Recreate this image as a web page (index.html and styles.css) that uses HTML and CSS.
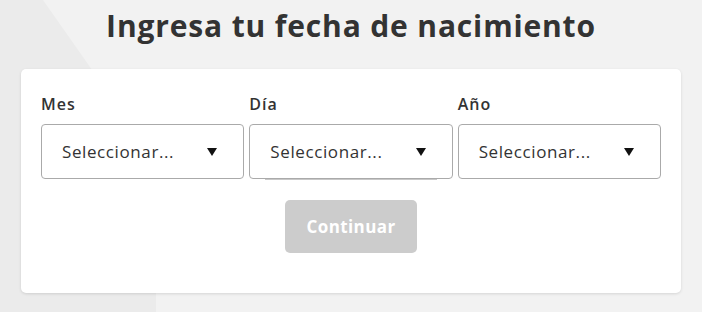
FILE: index.html
```html
<!DOCTYPE html>
<html lang="es">
<head>
<meta charset="utf-8">
<title>Ingresa tu fecha de nacimiento</title>
<link rel="stylesheet" href="styles.css">
</head>
<body>
<div class="page">
  <h1 class="title">Ingresa tu fecha de nacimiento</h1>
  <div class="card">
    <div class="fields">
      <div class="field">
        <label class="label">Mes</label>
        <div class="select"><span class="value">Seleccionar...</span><svg class="arrow" width="10" height="8" viewBox="0 0 10 8"><path d="M0 0H10L5 8Z" fill="#111"/></svg></div>
      </div>
      <div class="field">
        <label class="label">Día</label>
        <div class="select select-open"><span class="value">Seleccionar...</span><svg class="arrow" width="10" height="8" viewBox="0 0 10 8"><path d="M0 0H10L5 8Z" fill="#111"/></svg></div>
      </div>
      <div class="field">
        <label class="label">Año</label>
        <div class="select"><span class="value">Seleccionar...</span><svg class="arrow" width="10" height="8" viewBox="0 0 10 8"><path d="M0 0H10L5 8Z" fill="#111"/></svg></div>
      </div>
    </div>
    <div class="actions">
      <button class="btn" type="button">Continuar</button>
    </div>
  </div>
</div>
</body>
</html>
```
FILE: styles.css
```css
html, body {
  margin: 0;
  padding: 0;
}
body {
  background: #f2f2f2;
  font-family: "Open Sans", "Noto Sans", sans-serif;
  color: #333;
  width: 702px;
  height: 312px;
  overflow: hidden;
  position: relative;
}
body::before {
  content: "";
  position: absolute;
  left: 0;
  top: 0;
  width: 702px;
  height: 312px;
  background: #ebebeb;
  clip-path: polygon(0 0, 43px 0, 156px 161px, 156px 312px, 0 312px);
  z-index: 0;
}
.page {
  position: relative;
  z-index: 1;
  padding-top: 7px;
}
.title {
  margin: 0;
  text-align: center;
  font-size: 30px;
  line-height: 38px;
  font-weight: 700;
  color: #333;
  letter-spacing: 0.85px;
}
.card {
  margin: 24px 21px 0;
  height: 224px;
  box-sizing: border-box;
  background: #fff;
  border-radius: 5px;
  box-shadow: 0 1px 3px rgba(0,0,0,0.12);
  padding: 25px 20px 0;
}
.fields {
  display: grid;
  grid-template-columns: repeat(3, 1fr);
  column-gap: 5px;
}
.field {
  display: flex;
  flex-direction: column;
  gap: 10px;
}
.label {
  font-size: 16px;
  line-height: 20px;
  font-weight: 600;
  color: #333;
  letter-spacing: 1px;
}
.select {
  position: relative;
  height: 55px;
  box-sizing: border-box;
  border: 1px solid #aaa;
  border-radius: 4px;
  display: flex;
  align-items: center;
  justify-content: space-between;
  padding: 0 26px 0 20px;
  font-size: 17px;
  letter-spacing: 0.6px;
  color: #333;
  background: #fff;
}
.select-open::after {
  content: "";
  position: absolute;
  left: 15px;
  right: 15px;
  bottom: -2px;
  height: 1px;
  background: #c8c8c8;
}
.arrow {
  display: block;
  flex: none;
}
.actions {
  display: flex;
  justify-content: center;
  margin-top: 21px;
}
.btn {
  width: 132px;
  height: 53px;
  border: 0;
  border-radius: 5px;
  background: #cccccc;
  color: #fff;
  font-family: "Open Sans", "Noto Sans", sans-serif;
  font-size: 17px;
  font-weight: 700;
  letter-spacing: 0.4px;
  padding: 0;
}
```
